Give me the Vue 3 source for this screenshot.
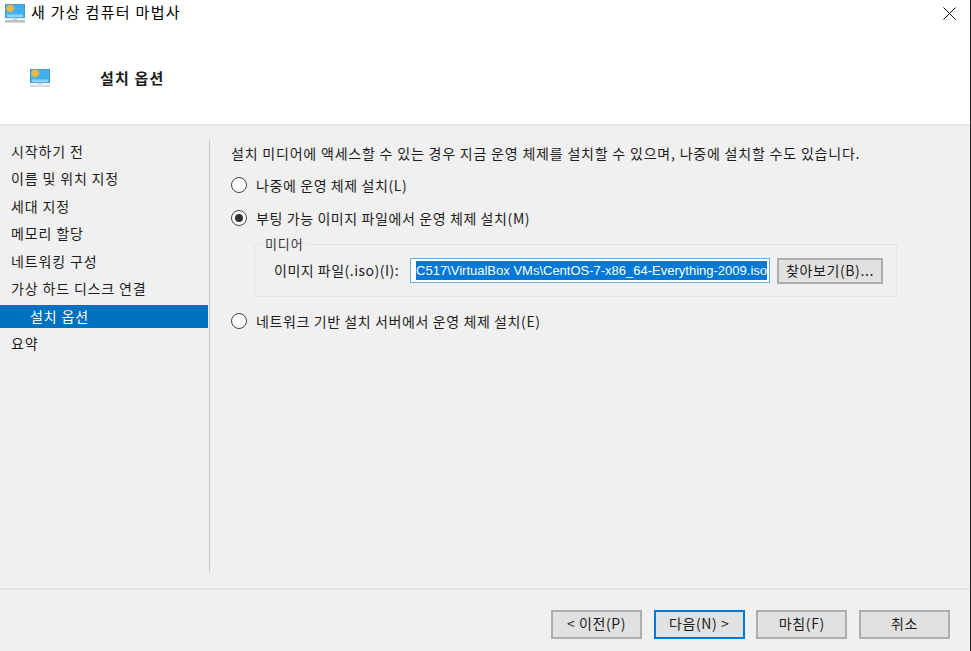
<template>
  <div class="wizard">
    <div class="title-bar">
      <svg class="monitor" width="20" height="20" viewBox="0 0 21 20">
        <rect x="0.5" y="1" width="20" height="14" fill="#3fb0ee" stroke="#4d94bd" />
        <rect x="2" y="11.5" width="17" height="3" fill="#8dd3f7" />
        <rect x="8" y="15.500" width="5" height="2" fill="#b9d3e2" />
        <rect x="0" y="17.500" width="21" height="2.500" fill="#b5bcc2" />
        <circle cx="5.500" cy="5" r="3.500" fill="#f6b73c" />
        <path d="M5.500 0v10M0.500 5h10M2 1.500l7 7M9 1.500l-7 7" stroke="#f6b73c" stroke-width="1" />
      </svg>
      <span class="title-text">새 가상 컴퓨터 마법사</span>
      <svg class="close" width="13" height="13" viewBox="0 0 13 13">
        <path d="M0.500 0.500l12 12M12.500 0.500l-12 12" stroke="#111" stroke-width="1" fill="none" />
      </svg>
    </div>

    <header class="page-header">
      <svg class="monitor" width="20" height="20" viewBox="0 0 21 20">
        <rect x="0.500" y="1" width="20" height="14" fill="#3fb0ee" stroke="#4d94bd" />
        <rect x="2" y="11.500" width="17" height="3" fill="#8dd3f7" />
        <rect x="8" y="15.500" width="5" height="2" fill="#cfe0ea" />
        <rect x="0" y="17.500" width="21" height="2" fill="#d5d9dc" />
        <circle cx="5.500" cy="5" r="3.500" fill="#f6b73c" />
        <path d="M5.500 0v10M0.500 5h10M2 1.500l7 7M9 1.500l-7 7" stroke="#f6b73c" stroke-width="1" />
      </svg>
      <h1>설치 옵션</h1>
    </header>

    <div class="body">
      <nav class="steps">
        <div
          v-for="step in steps"
          :key="step.label"
          class="step"
          :class="{ active: step.active }"
        >
          {{ step.label }}
        </div>
      </nav>

      <main class="content">
        <p class="intro">설치 미디어에 액세스할 수 있는 경우 지금 운영 체제를 설치할 수 있으며, 나중에 설치할 수도 있습니다.</p>

        <label class="radio">
          <span class="dot"></span>
          <span>나중에 운영 체제 설치(L)</span>
        </label>

        <label class="radio">
          <span class="dot checked"></span>
          <span>부팅 가능 이미지 파일에서 운영 체제 설치(M)</span>
        </label>

        <fieldset class="media">
          <legend>미디어</legend>
          <div class="file-row">
            <span class="file-label">이미지 파일(.iso)(I):</span>
            <div class="file-input"><span class="selected">C517\VirtualBox VMs\CentOS-7-x86_64-Everything-2009.iso</span></div>
            <button class="btn browse">찾아보기(B)...</button>
          </div>
        </fieldset>

        <label class="radio">
          <span class="dot"></span>
          <span>네트워크 기반 설치 서버에서 운영 체제 설치(E)</span>
        </label>
      </main>
    </div>

    <footer class="actions">
      <button class="btn">&lt; 이전(P)</button>
      <button class="btn primary">다음(N) &gt;</button>
      <button class="btn">마침(F)</button>
      <button class="btn">취소</button>
    </footer>
  </div>
</template>

<script setup>
const steps = [
  { label: '시작하기 전' },
  { label: '이름 및 위치 지정' },
  { label: '세대 지정' },
  { label: '메모리 할당' },
  { label: '네트워킹 구성' },
  { label: '가상 하드 디스크 연결' },
  { label: '설치 옵션', active: true },
  { label: '요약' }
]
</script>

<style>
html,
body {
  margin: 0;
  background: #fff;
}
</style>

<style scoped>
.wizard {
  width: 971px;
  height: 651px;
  display: flex;
  flex-direction: column;
  overflow: hidden;
  box-sizing: border-box;
  border-right: 1px solid #222;
  font-family: "Noto Sans CJK KR", "Liberation Sans", sans-serif;
  font-size: 14px;
  letter-spacing: 0.6px;
  color: #1c1c1c;
}

.title-bar {
  height: 26px;
  display: flex;
  align-items: flex-start;
  background: #fff;
  padding-left: 5px;
  flex: none;
}

.title-bar .monitor {
  margin-top: 3px;
  margin-right: 6px;
}

.title-text {
  font-size: 15px;
  letter-spacing: 1.3px;
  line-height: 24px;
  color: #000;
}

.close {
  margin-left: auto;
  margin-top: 7px;
  margin-right: 14px;
}

.page-header {
  height: 98px;
  flex: none;
  display: flex;
  align-items: center;
  background: #fff;
  padding-left: 30px;
  box-sizing: border-box;
}

.page-header .monitor {
  margin-top: 5px;
}

.page-header h1 {
  margin: 5px 0 0 50px;
  font-size: 15px;
  font-weight: 700;
  letter-spacing: 1.2px;
  color: #1c1c1c;
}

.body {
  flex: 1;
  display: flex;
  background: #f0f0f0;
  border-top: 2px solid #e6e6e6;
  padding: 14px 0 16px;
  min-height: 0;
}

.steps {
  width: 208px;
  flex: none;
  margin-right: 1px;
  margin-top: -0.25px;
}

.step {
  height: 23px;
  margin-bottom: 4.500px;
  line-height: 22px;
  padding-left: 11px;
  white-space: nowrap;
  letter-spacing: 0.85px;
}

.step.active {
  background: #0071bf;
  color: #fff;
  padding-left: 30px;
}

.content {
  flex: 1;
  border-left: 1px solid #c8c8c8;
  padding: 0 73px 0 21px;
  min-width: 0;
}

.intro {
  margin: 2px 0 11px;
  height: 22px;
  line-height: 22px;
  white-space: nowrap;
  letter-spacing: 0.8px;
}

.radio {
  display: flex;
  align-items: center;
  gap: 9px;
  height: 20px;
  margin-bottom: 13px;
  white-space: nowrap;
}

.dot {
  width: 14px;
  height: 14px;
  border: 1px solid #444;
  border-radius: 50%;
  background: #fff;
  position: relative;
  flex: none;
}

.dot.checked::after {
  content: '';
  position: absolute;
  left: 3px;
  top: 3px;
  width: 8px;
  height: 8px;
  border-radius: 50%;
  background: #333;
}

.media {
  margin: -4px 0 14px 23px;
  height: 60px;
  padding: 0 13px 0 19px;
  border: 1px solid #e3e3e3;
  box-sizing: border-box;
  min-width: 0;
}

.media legend {
  padding: 0 4px;
  margin-left: -13px;
  line-height: 14px;
  font-size: 13px;
  letter-spacing: 0.9px;
  color: #333;
}

.file-row {
  display: flex;
  align-items: flex-start;
  margin-top: 7px;
}

.file-label {
  width: 136px;
  flex: none;
  white-space: nowrap;
  line-height: 24px;
  letter-spacing: 0.5px;
}

.file-input {
  width: 360px;
  height: 25px;
  flex: none;
  box-sizing: border-box;
  border: 1px solid #66aee0;
  background: #fff;
  padding: 2px;
  overflow: hidden;
  display: flex;
  justify-content: flex-end;
  white-space: nowrap;
}

.selected {
  background: #0078d7;
  color: #fff;
  line-height: 19px;
  font-family: "Liberation Sans", sans-serif;
  font-size: 13px;
  letter-spacing: 0;
}

.btn {
  width: 91px;
  height: 29px;
  box-sizing: border-box;
  background: #e1e1e1;
  border: 2px solid #adadad;
  font: inherit;
  letter-spacing: inherit;
  color: #1c1c1c;
  padding: 0 0 4px;
}

.btn.primary {
  border-color: #0078d7;
}

.browse {
  width: 107px;
  height: 26px;
  margin-left: 7px;
  padding-bottom: 2px;
}

.actions {
  flex: none;
  height: 63px;
  box-sizing: border-box;
  border-top: 2px solid #e3e3e3;
  background: #f0f0f0;
  display: flex;
  justify-content: flex-end;
  align-items: flex-start;
  gap: 11.670px;
  padding: 20px 20px 0 0;
}
</style>
